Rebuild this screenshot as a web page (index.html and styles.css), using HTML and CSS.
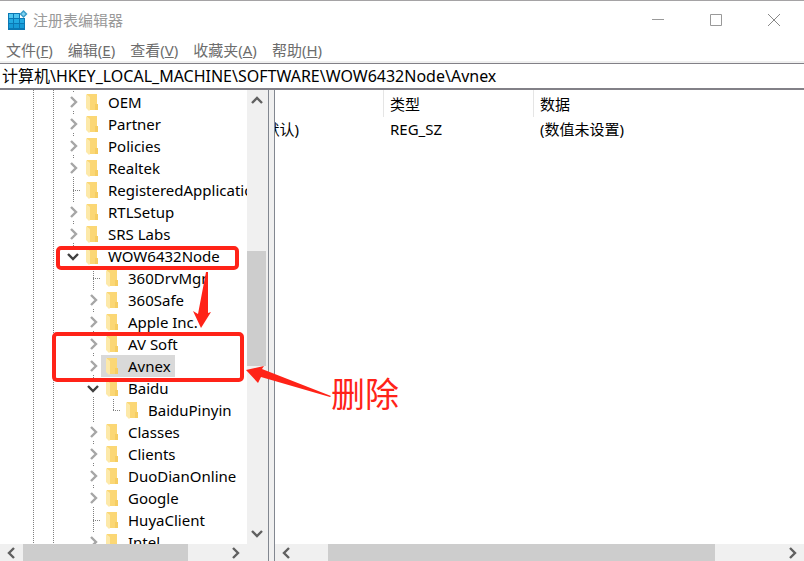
FILE: index.html
```html
<!DOCTYPE html>
<html lang="zh-CN">
<head>
    <meta charset="UTF-8">
    <meta name="viewport" content="width=device-width, initial-scale=1.0">
    <title>注册表编辑器</title>
    <link rel="stylesheet" href="styles.css">
</head>
<body>

    <!-- shared icons -->
    <svg class="defs" width="0" height="0" aria-hidden="true">
        <symbol id="folder" viewBox="0 0 13 17">
            <path d="M1 0H11V11H12V16H3V2H1Z" fill="#fbd775"/>
            <path d="M9 10H12V16H9Z" fill="#f6cd62"/>
            <path d="M0 0L4 3V16L3 17L0 14Z" fill="#fde9a9"/>
        </symbol>
        <symbol id="right" viewBox="0 0 10 12">
            <path d="M2 1L7 6L2 11" fill="none" stroke="currentColor" stroke-width="2.400"/>
        </symbol>
        <symbol id="left" viewBox="0 0 10 12">
            <path d="M8 1L3 6L8 11" fill="none" stroke="currentColor" stroke-width="2.400"/>
        </symbol>
        <symbol id="down" viewBox="0 0 12 10">
            <path d="M1 3L6 8L11 3" fill="none" stroke="currentColor" stroke-width="2.400"/>
        </symbol>
        <symbol id="up" viewBox="0 0 12 10">
            <path d="M1 7L6 2L11 7" fill="none" stroke="currentColor" stroke-width="2.400"/>
        </symbol>
    </svg>

    <header class="titlebar">
        <svg class="app-icon" width="20" height="20" viewBox="0 0 20 20" aria-hidden="true">
            <path d="M0 3H12V8H17V20H0Z" fill="#0b78b4"/>
            <path d="M1 4H5V8H1ZM6 4H11V8H6Z" fill="#4fc6f0"/>
            <path d="M1 9H5V13H1ZM6 9H11V13H6ZM12 9H16V13H12Z" fill="#22aae2"/>
            <path d="M1 14H5V18H1ZM6 14H11V18H6ZM12 14H16V18H12Z" fill="#169bd7"/>
            <path d="M15.500 0L19.500 4L15.500 8L11.500 4Z" fill="#3a9cc9"/>
            <path d="M15.500 2L17.500 4L15.500 6L13.500 4Z" fill="#7fd3f3"/>
        </svg>
        <h1 class="title">注册表编辑器</h1>
        <div class="window-buttons">
            <button class="window-btn" aria-label="最小化"><svg width="14" height="14"><path d="M1 6.500H13" stroke="#999"/></svg></button>
            <button class="window-btn" aria-label="最大化"><svg width="14" height="14"><path d="M1.500 1.500H12.500V12.500H1.500Z" fill="none" stroke="#999"/></svg></button>
            <button class="window-btn" aria-label="关闭"><svg width="14" height="14"><path d="M1 1L13 13M13 1L1 13" stroke="#888"/></svg></button>
        </div>
    </header>

    <nav class="menu">
        <button class="menu-item">文件(<u>F</u>)</button>
        <button class="menu-item">编辑(<u>E</u>)</button>
        <button class="menu-item">查看(<u>V</u>)</button>
        <button class="menu-item">收藏夹(<u>A</u>)</button>
        <button class="menu-item">帮助(<u>H</u>)</button>
    </nav>

    <input class="address" type="text" aria-label="地址" value="计算机\HKEY_LOCAL_MACHINE\SOFTWARE\WOW6432Node\Avnex">

    <main class="panes">
        <section class="tree-pane">
            <div class="tree-view">
                <ul class="tree">
                    <li><div class="row"><button class="toggle" aria-label="展开"><svg><use href="#right"/></svg></button><button class="key"><svg><use href="#folder"/></svg>OEM</button></div></li>
                    <li><div class="row"><button class="toggle" aria-label="展开"><svg><use href="#right"/></svg></button><button class="key"><svg><use href="#folder"/></svg>Partner</button></div></li>
                    <li><div class="row"><button class="toggle" aria-label="展开"><svg><use href="#right"/></svg></button><button class="key"><svg><use href="#folder"/></svg>Policies</button></div></li>
                    <li><div class="row"><button class="toggle" aria-label="展开"><svg><use href="#right"/></svg></button><button class="key"><svg><use href="#folder"/></svg>Realtek</button></div></li>
                    <li><div class="row"><span class="branch"></span><button class="key"><svg><use href="#folder"/></svg>RegisteredApplications</button></div></li>
                    <li><div class="row"><button class="toggle" aria-label="展开"><svg><use href="#right"/></svg></button><button class="key"><svg><use href="#folder"/></svg>RTLSetup</button></div></li>
                    <li><div class="row"><button class="toggle" aria-label="展开"><svg><use href="#right"/></svg></button><button class="key"><svg><use href="#folder"/></svg>SRS Labs</button></div></li>
                    <li>
                        <div class="row"><button class="toggle open" aria-label="折叠"><svg><use href="#down"/></svg></button><button class="key"><svg><use href="#folder"/></svg>WOW6432Node</button></div>
                        <ul>
                            <li><div class="row"><span class="branch"></span><button class="key"><svg><use href="#folder"/></svg>360DrvMgr</button></div></li>
                            <li><div class="row"><button class="toggle" aria-label="展开"><svg><use href="#right"/></svg></button><button class="key"><svg><use href="#folder"/></svg>360Safe</button></div></li>
                            <li><div class="row"><button class="toggle" aria-label="展开"><svg><use href="#right"/></svg></button><button class="key"><svg><use href="#folder"/></svg>Apple Inc.</button></div></li>
                            <li><div class="row"><button class="toggle" aria-label="展开"><svg><use href="#right"/></svg></button><button class="key"><svg><use href="#folder"/></svg>AV Soft</button></div></li>
                            <li><div class="row"><button class="toggle" aria-label="展开"><svg><use href="#right"/></svg></button><button class="key selected"><svg><use href="#folder"/></svg>Avnex</button></div></li>
                            <li>
                                <div class="row"><button class="toggle open" aria-label="折叠"><svg><use href="#down"/></svg></button><button class="key"><svg><use href="#folder"/></svg>Baidu</button></div>
                                <ul>
                                    <li><div class="row"><span class="branch"></span><button class="key"><svg><use href="#folder"/></svg>BaiduPinyin</button></div></li>
                                </ul>
                            </li>
                            <li><div class="row"><button class="toggle" aria-label="展开"><svg><use href="#right"/></svg></button><button class="key"><svg><use href="#folder"/></svg>Classes</button></div></li>
                            <li><div class="row"><button class="toggle" aria-label="展开"><svg><use href="#right"/></svg></button><button class="key"><svg><use href="#folder"/></svg>Clients</button></div></li>
                            <li><div class="row"><button class="toggle" aria-label="展开"><svg><use href="#right"/></svg></button><button class="key"><svg><use href="#folder"/></svg>DuoDianOnline</button></div></li>
                            <li><div class="row"><button class="toggle" aria-label="展开"><svg><use href="#right"/></svg></button><button class="key"><svg><use href="#folder"/></svg>Google</button></div></li>
                            <li><div class="row"><span class="branch"></span><button class="key"><svg><use href="#folder"/></svg>HuyaClient</button></div></li>
                            <li><div class="row"><button class="toggle" aria-label="展开"><svg><use href="#right"/></svg></button><button class="key"><svg><use href="#folder"/></svg>Intel</button></div></li>
                        </ul>
                    </li>
                </ul>
                <div class="vscroll">
                    <button class="scroll-btn" aria-label="向上"><svg width="12" height="10"><use href="#up"/></svg></button>
                    <span class="thumb"></span>
                    <button class="scroll-btn last" aria-label="向下"><svg width="12" height="10"><use href="#down"/></svg></button>
                </div>
            </div>
            <div class="hscroll hscroll-tree">
                <button class="scroll-btn" aria-label="向左"><svg width="10" height="12"><use href="#left"/></svg></button>
                <span class="thumb"></span>
                <button class="scroll-btn last" aria-label="向右"><svg width="10" height="12"><use href="#right"/></svg></button>
            </div>
        </section>

        <div class="splitter"></div>

        <section class="value-pane">
            <div class="value-view">
                <table class="values">
                    <thead>
                        <tr><th class="col-name">名称</th><th class="col-type">类型</th><th>数据</th></tr>
                    </thead>
                    <tbody>
                        <tr><td class="name">(默认)</td><td>REG_SZ</td><td>(数值未设置)</td></tr>
                    </tbody>
                </table>
            </div>
            <div class="hscroll hscroll-values">
                <button class="scroll-btn" aria-label="向左"><svg width="10" height="12"><use href="#left"/></svg></button>
                <span class="thumb"></span>
                <button class="scroll-btn last" aria-label="向右"><svg width="10" height="12"><use href="#right"/></svg></button>
            </div>
        </section>
    </main>

    <!-- red marks over the window -->
    <svg class="marks" width="420" height="440" viewBox="0 0 420 440">
        <rect x="58" y="248" width="179" height="20" rx="3"/>
        <rect x="54" y="334" width="188" height="46" rx="3"/>
        <path d="M206 272L208 272L208 313L211 312L201 328L193 311L198 314Z"/>
        <path d="M331 396L330 397L261 377L258 383L246 370L264 366L262 369Z"/>
        <text x="331" y="407">删除</text>
    </svg>

</body>
</html>
```

FILE: styles.css
```css
* {
    box-sizing: border-box;
}
body {
    margin: 0;
    height: 100vh;
    display: flex;
    flex-direction: column;
    position: relative;
    overflow: hidden;
    background-color: #fff;
    color: #000;
    font-family: "Noto Sans", "Noto Sans CJK SC", sans-serif;
    font-size: 15px;
    line-height: 22px;
    border-top: 1px solid #a5a3a5;
}
button {
    font: inherit;
    color: inherit;
    background: none;
    border: none;
    padding: 0;
}
svg {
    display: block;
    flex: none;
}
.defs {
    position: absolute;
}
.titlebar {
    height: 37px;
    display: flex;
    align-items: center;
    padding-left: 8px;
}
.title {
    flex: 1;
    margin: 0 0 0 5px;
    font-size: 15px;
    font-weight: normal;
    color: #999;
}
.window-buttons {
    display: flex;
    padding-right: 1px;
}
.window-btn {
    width: 58px;
    height: 36px;
    display: flex;
    align-items: center;
    justify-content: center;
}
.menu {
    height: 25px;
    display: flex;
    align-items: center;
    gap: 15px;
    padding-left: 6px;
    color: #6d6d6d;
    border-bottom: 2px solid #f0f0f0;
}
.menu-item {
    white-space: nowrap;
}
.address {
    width: 100%;
    height: 27px;
    margin: 0;
    padding: 0 2px 2px;
    border: 0 solid #828087;
    border-width: 1px 0 2px;
    font: inherit;
    font-size: 16px;
    color: #000;
    outline: none;
}
.panes {
    flex: 1;
    min-height: 0;
    display: flex;
}

/* tree */
.tree-pane {
    flex: none;
    width: 268px;
    display: flex;
    flex-direction: column;
    background-color: #f0f0f0;
}
.tree-view {
    flex: 1;
    min-height: 0;
    display: flex;
    padding-right: 1px;
}
.tree {
    flex: 1;
    min-width: 0;
    overflow: hidden;
    margin: 0;
    padding: 1px 0 0 63px;
    list-style: none;
    background:
        repeating-linear-gradient(#808080 0 1px, transparent 1px 2px) 33px 0 / 1px 100% no-repeat,
        repeating-linear-gradient(#808080 0 1px, transparent 1px 2px) 53px 0 / 1px 100% no-repeat,
        #fff;
}
.tree ul {
    margin: 0;
    padding-left: 20px;
    list-style: none;
}
.tree li {
    background: repeating-linear-gradient(#808080 0 1px, transparent 1px 2px) 10px 0 / 1px 100% no-repeat;
}
.tree li:last-child {
    background-size: 1px 12px;
}
.row {
    height: 22px;
    display: flex;
    align-items: center;
}
.toggle {
    flex: none;
    width: 18px;
    height: 18px;
    display: flex;
    align-items: center;
    justify-content: center;
    padding-left: 3px;
    background-color: #fff;
    color: #a6a6a6;
}
.toggle svg {
    width: 10px;
    height: 12px;
}
.toggle.open {
    padding-left: 1px;
    color: #404040;
}
.toggle.open svg {
    width: 12px;
    height: 10px;
}
.branch {
    flex: none;
    width: 8px;
    height: 1px;
    margin-left: 10px;
    background: repeating-linear-gradient(to right, #808080 0 1px, transparent 1px 2px);
}
.key {
    flex: none;
    height: 22px;
    display: flex;
    align-items: center;
    gap: 9px;
    padding: 0 4px 0 5px;
    white-space: nowrap;
}
.key svg {
    width: 13px;
    height: 17px;
}
.key.selected {
    background-color: #d9d9d9;
}

/* scroll bars */
.vscroll,
.hscroll {
    flex: none;
    display: grid;
    background-color: #f0f0f0;
    color: #606060;
}
.vscroll {
    width: 20px;
    grid-template-rows: 22px 139fr 115fr 156fr 22px;
    padding-right: 1px;
}
.vscroll .thumb {
    grid-row: 3;
}
.vscroll .last {
    grid-row: 5;
}
.hscroll {
    height: 17px;
}
.hscroll-tree {
    width: 247px;
    grid-template-columns: 22px 1fr 165fr 37fr 22px;
}
.hscroll-values {
    grid-template-columns: 22px 31fr 387fr 67fr 22px;
}
.hscroll .thumb {
    grid-column: 3;
}
.hscroll .last {
    grid-column: 5;
}
.thumb {
    background-color: #cdcdcd;
}
.scroll-btn {
    display: flex;
    align-items: center;
    justify-content: center;
}

.splitter {
    flex: none;
    width: 7px;
    background-color: #f0f0f0;
    border: 0 solid #828790;
    border-width: 0 1px;
}

/* values */
.value-pane {
    flex: 1;
    min-width: 0;
    display: flex;
    flex-direction: column;
}
.value-view {
    flex: 1;
    overflow: hidden;
}
/* the list is scrolled a little to the right */
.values {
    width: 640px;
    margin-left: -52px;
    table-layout: fixed;
    border-collapse: separate;
    border-spacing: 0;
}
.values th,
.values td {
    padding: 1px 6px;
    text-align: left;
    font-weight: normal;
    white-space: nowrap;
}
.values th {
    height: 27px;
}
.values th + th {
    border-left: 1px solid #e5e5e5;
}
.values td + td {
    padding-left: 7px;
}
.col-name {
    width: 160px;
}
.col-type {
    width: 150px;
}
.values .name {
    padding-left: 37px;
}

.marks {
    position: absolute;
    top: -1px;
    left: 0;
    pointer-events: none;
    fill: #ff2318;
}
.marks rect {
    fill: none;
    stroke: #ff2318;
    stroke-width: 4px;
}
.marks text {
    font-size: 34px;
}
```
